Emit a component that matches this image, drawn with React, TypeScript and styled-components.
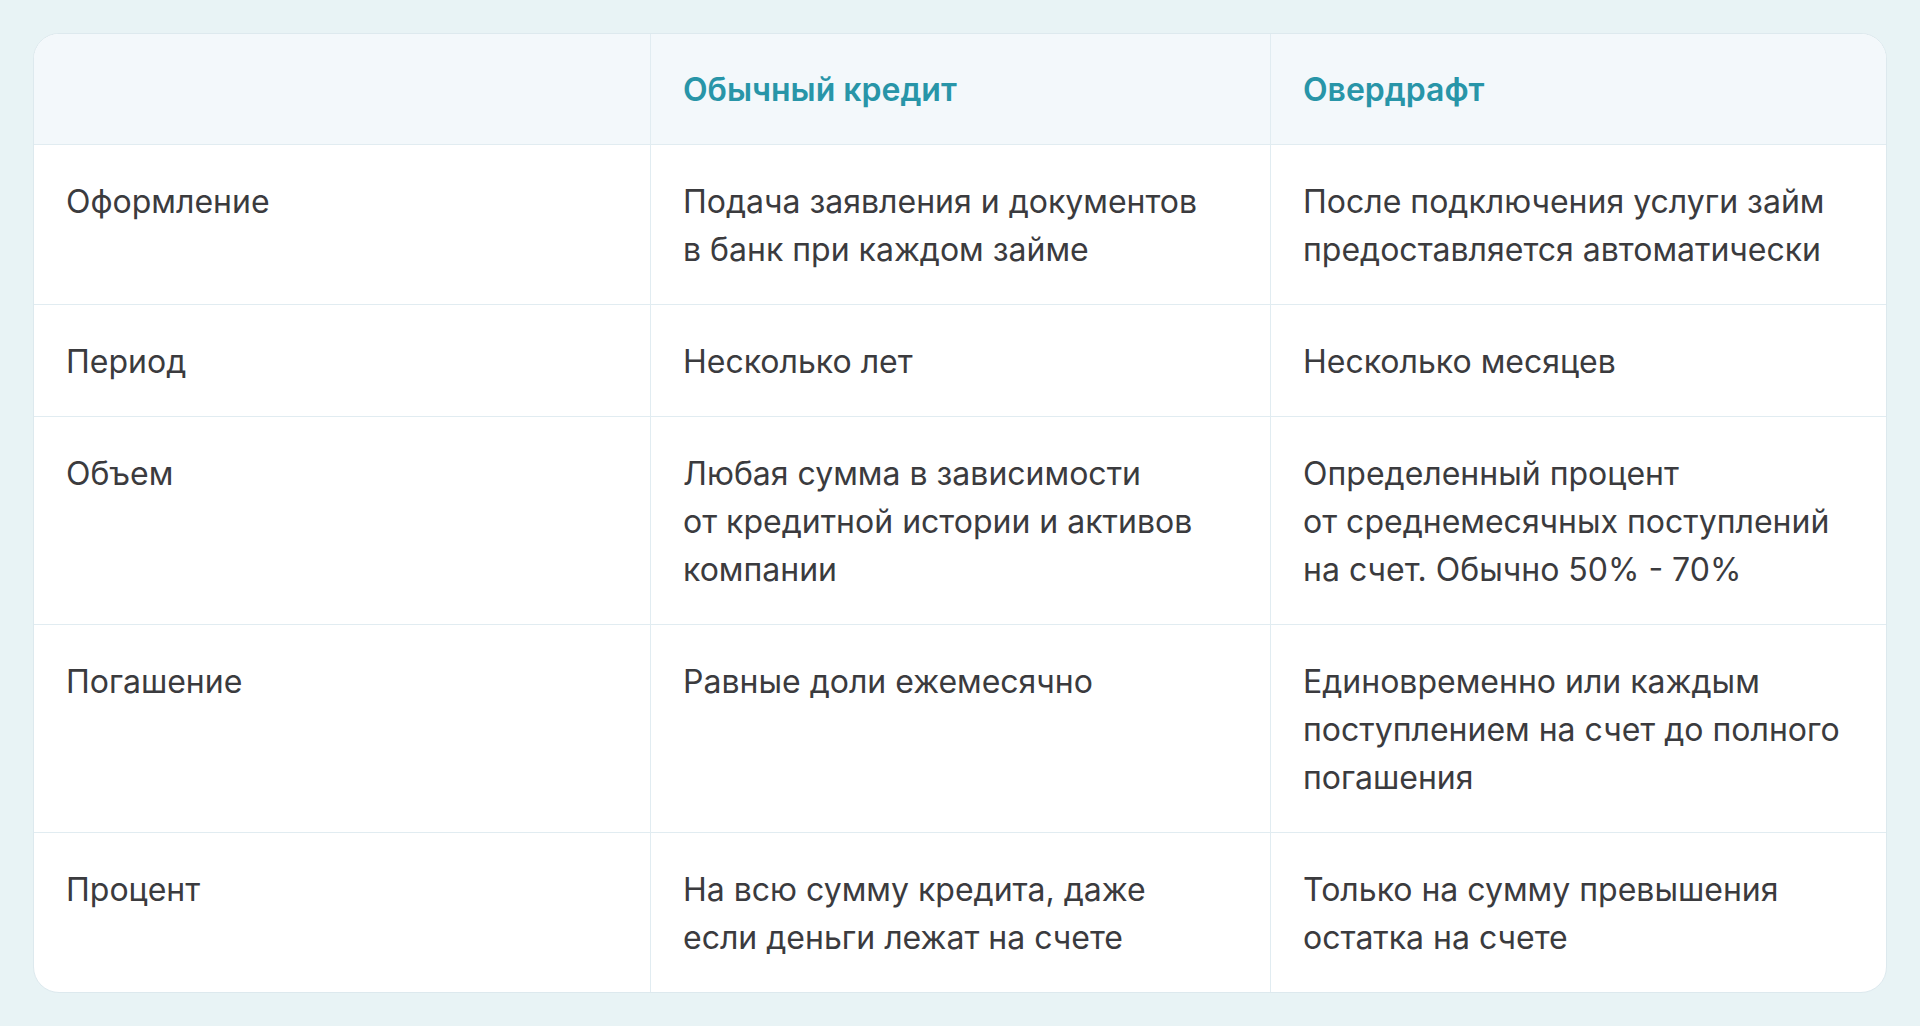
import styled, { createGlobalStyle } from 'styled-components';

const GlobalStyle = createGlobalStyle`
    * {
        box-sizing: border-box;
    }
    body {
        margin: 0;
        background: #e8f3f5;
        font-family: 'Inter', 'Noto Sans', sans-serif;
    }
`;

const Page = styled.div`
    padding: 33px;
`;

const Card = styled.div`
    display: grid;
    grid-template-columns: 617px 620px 1fr;
    background: #ffffff;
    border: 1px solid #dde9ee;
    border-radius: 26px;
    overflow: hidden;
`;

const HeadCell = styled.div<{ $last?: boolean }>`
    background: #f3f8fb;
    padding: 32px 32px 30px;
    font-size: 32px;
    line-height: 48px;
    font-weight: 600;
    color: #2895a8;
    border-bottom: 1px solid #e1ecf1;
    border-right: ${(p) => (p.$last ? 'none' : '1px solid #e1ecf1')};
`;

const Cell = styled.div<{ $last?: boolean; $bottom?: boolean }>`
    padding: 33px 32px 30px;
    font-size: 32px;
    line-height: 48px;
    font-weight: 400;
    color: #3b3b3e;
    border-bottom: ${(p) => (p.$bottom ? 'none' : '1px solid #e1ecf1')};
    border-right: ${(p) => (p.$last ? 'none' : '1px solid #e1ecf1')};
`;

const rows: string[][][] = [
    [
        ['Оформление'],
        ['Подача заявления и документов', 'в банк при каждом займе'],
        ['После подключения услуги займ', 'предоставляется автоматически'],
    ],
    [['Период'], ['Несколько лет'], ['Несколько месяцев']],
    [
        ['Объем'],
        ['Любая сумма в зависимости', 'от кредитной истории и активов', 'компании'],
        ['Определенный процент', 'от среднемесячных поступлений', 'на счет. Обычно 50% - 70%'],
    ],
    [
        ['Погашение'],
        ['Равные доли ежемесячно'],
        ['Единовременно или каждым', 'поступлением на счет до полного', 'погашения'],
    ],
    [
        ['Процент'],
        ['На всю сумму кредита, даже', 'если деньги лежат на счете'],
        ['Только на сумму превышения', 'остатка на счете'],
    ],
];

export default function App() {
    return (
        <Page>
            <GlobalStyle />
            <Card>
                <HeadCell />
                <HeadCell>Обычный кредит</HeadCell>
                <HeadCell $last>Овердрафт</HeadCell>
                {rows.map((row, r) =>
                    row.map((lines, c) => (
                        <Cell key={`${r}-${c}`} $last={c === 2} $bottom={r === rows.length - 1}>
                            {lines.map((line, i) => (
                                <div key={i}>{line}</div>
                            ))}
                        </Cell>
                    ))
                )}
            </Card>
        </Page>
    );
}
